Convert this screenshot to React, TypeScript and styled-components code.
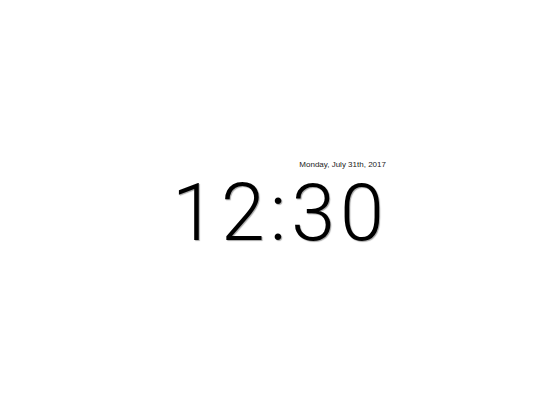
import styled, { createGlobalStyle } from "styled-components";

const Global = createGlobalStyle`
  html, body, #root { margin:0; padding:0; height:100%; background:#fff; }
  body { font-family:"Liberation Sans", Arial, sans-serif; }
`;

const Screen = styled.div`
  height:100vh;
  display:flex;
  align-items:center;
  justify-content:center;
  padding:0 0 4px 4px;
  box-sizing:border-box;
`;

const Clock = styled.div`
  display:flex;
  flex-flow:column nowrap;
  align-items:flex-end;
`;

const DateLine = styled.div`
  font-size:8px;
  line-height:10px;
  color:#222;
  margin:0 -2px 8px 0;
`;

const Time = styled.div`
  font-family:Roboto, "Liberation Sans", sans-serif;
  font-weight:300;
  font-size:79px;
  line-height:0.9;
  color:#000;
  letter-spacing:5px;
  margin-right:-5px;
  text-shadow:1px 1px 1px rgba(0,0,0,.35);
`;

export default function App() {
  return (
    <>
      <Global />
      <Screen>
        <Clock>
          <DateLine>Monday, July 31th, 2017</DateLine>
          <Time>12:30</Time>
        </Clock>
      </Screen>
    </>
  );
}
